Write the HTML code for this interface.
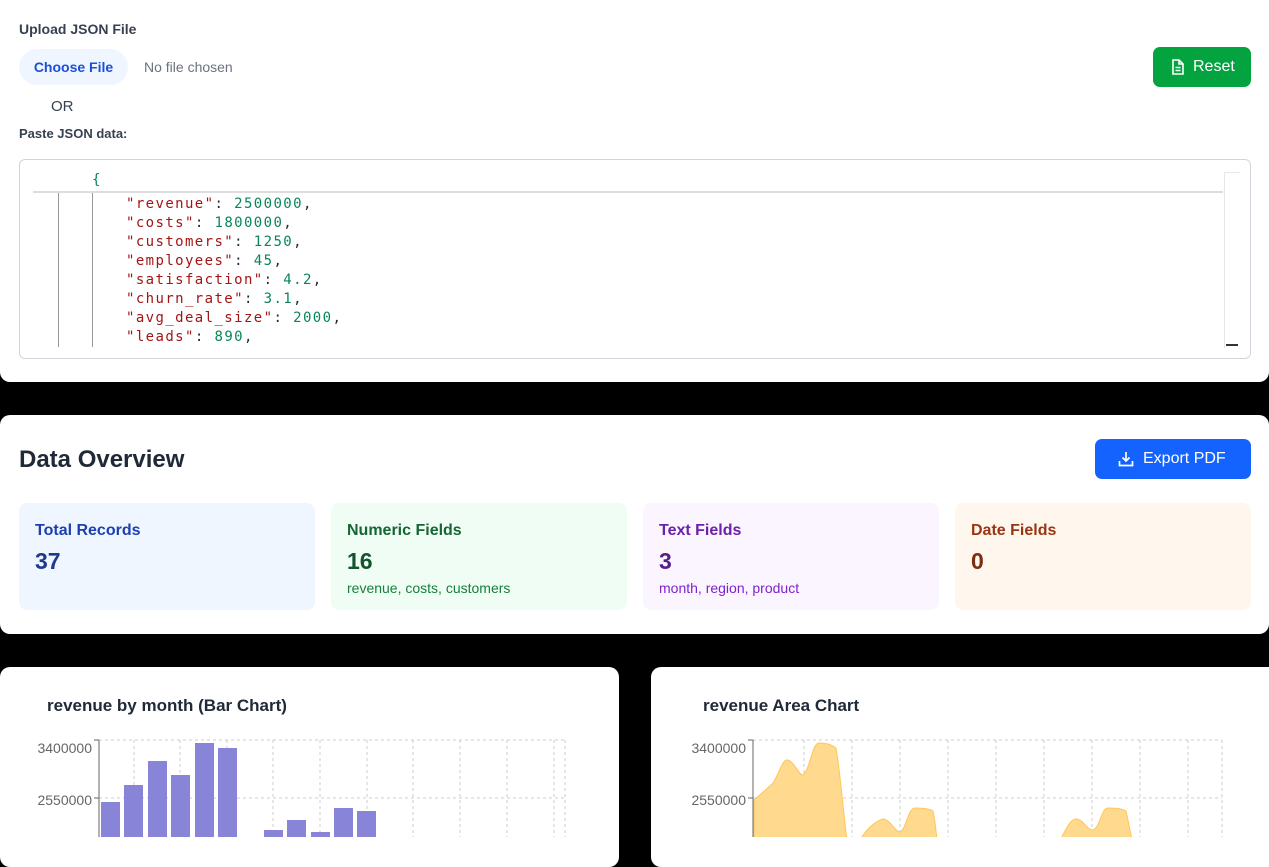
<!DOCTYPE html>
<html><head><meta charset="utf-8"><style>
*{box-sizing:border-box;margin:0;padding:0}
body{width:1269px;height:837px;background:#000;font-family:"Liberation Sans",sans-serif;overflow:hidden;position:relative;color:#1f2937}
.p{position:absolute;background:#fff}
.abs{position:absolute}
.mono{font-family:"DejaVu Sans Mono","Liberation Mono",monospace;font-size:14px;letter-spacing:1.4px;white-space:pre}
.k{color:#a31515}.n{color:#098658}
.card{position:absolute;top:503px;width:296px;height:107px;border-radius:8px;padding:19px 16px}
.card .t{font-size:16px;font-weight:bold}
.card .v{font-size:23px;font-weight:bold;margin-top:8px}
.card .s{font-size:14px;margin-top:5px}
</style></head><body>
<div class="p" style="left:0;top:0;width:1269px;height:382px;border-radius:0 0 10px 10px">
 <div class="abs" style="left:19px;top:21px;font-size:14px;font-weight:bold;color:#374151">Upload JSON File</div>
 <div class="abs" style="left:19px;top:49px;width:109px;height:36px;border-radius:18px;background:#eff6ff;color:#1d4ed8;font-size:14px;font-weight:bold;line-height:36px;text-align:center">Choose File</div>
 <div class="abs" style="left:144px;top:59px;font-size:14px;color:#6b7280">No file chosen</div>
 <div class="abs" style="left:1153px;top:47px;width:98px;height:40px;border-radius:7px;background:#03a33f;color:#fff;font-size:16px;line-height:40px">
  <svg class="abs" style="left:18px;top:12px" width="14" height="16" viewBox="0 0 14 16" fill="none" stroke="#fff" stroke-width="1.6"><path d="M2 1h6l4 4v10H2z M8 1v4h4 M4.5 8.5h5 M4.5 11.5h5"/></svg>
  <span class="abs" style="left:40px">Reset</span></div>
 <div class="abs" style="left:51px;top:98px;font-size:15px;color:#374151">OR</div>
 <div class="abs" style="left:19px;top:126px;font-size:13px;font-weight:bold;color:#374151">Paste JSON data:</div>
 <div class="abs" style="left:19px;top:159px;width:1232px;height:200px;border:1px solid #d1d5db;border-radius:6px;overflow:hidden">
  <div class="abs mono" style="left:72px;top:12px;color:#098658">{</div>
  <div class="abs" style="left:13px;top:31px;width:1190px;height:2px;background:#ddd"></div>
  <div class="abs" style="left:38px;top:33px;width:1px;height:154px;background:#999"></div>
  <div class="abs" style="left:72px;top:33px;width:1px;height:154px;background:#999"></div>
  <div class="abs mono" style="left:106px;top:35px;line-height:19px"><span class="k">"revenue"</span>: <span class="n">2500000</span>,
<span class="k">"costs"</span>: <span class="n">1800000</span>,
<span class="k">"customers"</span>: <span class="n">1250</span>,
<span class="k">"employees"</span>: <span class="n">45</span>,
<span class="k">"satisfaction"</span>: <span class="n">4.2</span>,
<span class="k">"churn_rate"</span>: <span class="n">3.1</span>,
<span class="k">"avg_deal_size"</span>: <span class="n">2000</span>,
<span class="k">"leads"</span>: <span class="n">890</span>,</div>
  <div class="abs" style="left:1204px;top:12px;width:16px;height:176px;border-left:1px solid #e5e7eb;border-top:1px solid #e5e7eb"></div>
  <div class="abs" style="left:1206px;top:184px;width:12px;height:2px;background:#333"></div>
 </div>
</div>
<div class="p" style="left:0;top:415px;width:1269px;height:219px;border-radius:10px">
 <div class="abs" style="left:19px;top:31px;font-size:24px;font-weight:bold;color:#1f2937">Data Overview</div>
 <div class="abs" style="left:1095px;top:24px;width:156px;height:40px;border-radius:7px;background:#1463ff;color:#fff;font-size:16px;line-height:40px">
  <svg class="abs" style="left:23px;top:12px" width="16" height="16" viewBox="0 0 16 16" fill="none" stroke="#fff" stroke-width="1.7"><path d="M8 1v9 M4.5 6.5 8 10l3.5-3.5 M1.5 10v4.5h13V10"/></svg>
  <span class="abs" style="left:48px">Export PDF</span></div>
</div>
<div class="card" style="left:19px;background:#eff6ff"><div class="t" style="color:#1e40af">Total Records</div><div class="v" style="color:#1e3a8a">37</div></div>
<div class="card" style="left:331px;background:#f0fdf4"><div class="t" style="color:#166534">Numeric Fields</div><div class="v" style="color:#14532d">16</div><div class="s" style="color:#15803d">revenue, costs, customers</div></div>
<div class="card" style="left:643px;background:#faf5ff"><div class="t" style="color:#6b21a8">Text Fields</div><div class="v" style="color:#581c87">3</div><div class="s" style="color:#7e22ce">month, region, product</div></div>
<div class="card" style="left:955px;background:#fff7ed"><div class="t" style="color:#9a3412">Date Fields</div><div class="v" style="color:#7c2d12">0</div></div>

<div class="p" style="left:0;top:667px;width:619px;height:200px;border-radius:10px"></div>
<div class="p" style="left:651px;top:667px;width:630px;height:200px;border-radius:10px"></div>
<svg class="abs" style="left:0;top:0" width="1269" height="837">
 <g font-family="Liberation Sans" font-size="17" font-weight="bold" fill="#1f2937">
  <text x="47" y="711">revenue by month (Bar Chart)</text>
  <text x="703" y="711">revenue Area Chart</text>
 </g>
 <g font-family="Liberation Sans" font-size="14" fill="#666" text-anchor="end">
  <text x="92" y="753">3400000</text><text x="92" y="805">2550000</text>
  <text x="746" y="753">3400000</text><text x="746" y="805">2550000</text>
 </g>
 <g stroke="#ccc" stroke-dasharray="3 3" fill="none">
  <path d="M99 740H565M99 798H565 M134 740V837M180 740V837M227 740V837M273 740V837M320 740V837M367 740V837M413 740V837M460 740V837M507 740V837M554 740V837M565 740V837"/>
  <path d="M753 740H1222M753 798H1222 M804 740V837M852 740V837M900 740V837M948 740V837M996 740V837M1044 740V837M1092 740V837M1140 740V837M1188 740V837M1222 740V837"/>
 </g>
 <g stroke="#666" fill="none"><path d="M99 740V837M94 740H99M94 798H99"/><path d="M753 740V837M748 740H753M748 798H753"/></g>
 <g fill="#8884d8">
  <rect x="101" y="802" width="19" height="40"/><rect x="124" y="785" width="19" height="60"/><rect x="148" y="761" width="19" height="80"/><rect x="171" y="775" width="19" height="70"/><rect x="195" y="743" width="19" height="100"/><rect x="218" y="748" width="19" height="100"/>
  <rect x="264" y="830" width="19" height="10"/><rect x="287" y="820" width="19" height="20"/><rect x="311" y="832" width="19" height="10"/><rect x="334" y="808" width="19" height="30"/><rect x="357" y="811" width="19" height="30"/>
 </g>
 <g fill="#ffd98e" stroke="#ffc658" stroke-width="1">
  <path d="M754 800C762 793 768 788 773 783C779 774 782 760 787 760C794 760 798 775 803 775C810 770 812 743 819 743C826 743 830 744 836 748C840 770 843 810 847 840H754Z"/>
  <path d="M860 840C866 830 874 822 883 819C890 819 895 832 900 832C906 830 908 808 915 808C925 808 930 809 933 811C935 820 936 830 937 840Z"/>
  <path d="M1060 840C1066 830 1070 819 1076 819C1083 819 1087 830 1093 830C1100 828 1101 808 1108 808C1118 808 1122 809 1126 811C1128 820 1130 830 1132 840Z"/>
 </g>
</svg>
</body></html>
